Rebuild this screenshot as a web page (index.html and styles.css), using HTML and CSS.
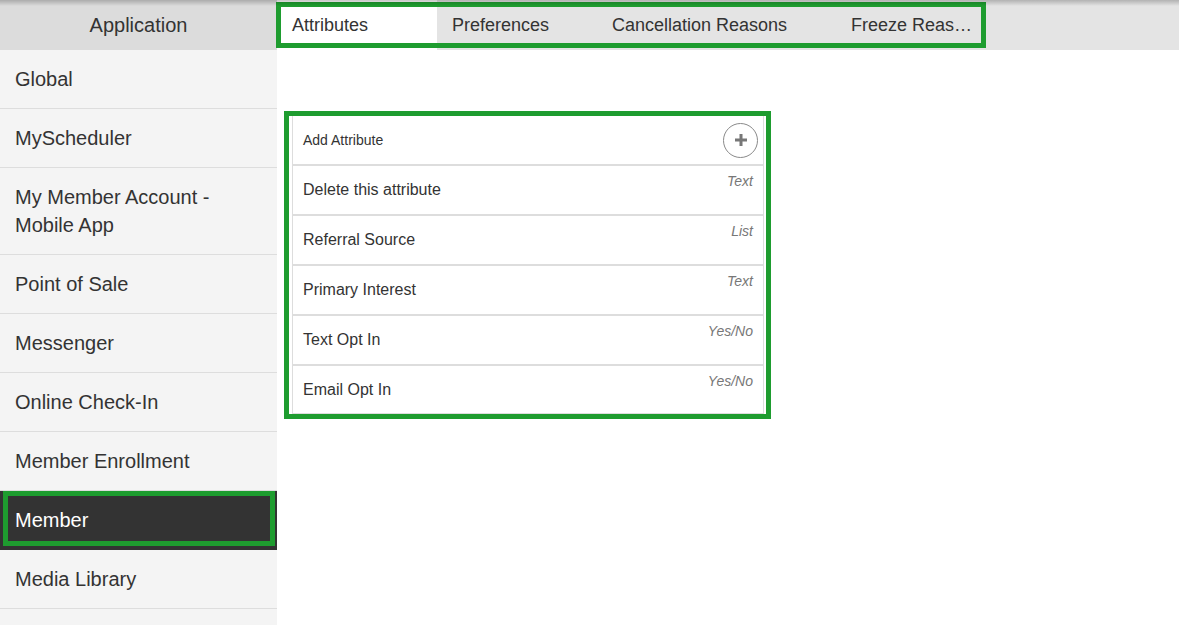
FILE: index.html
```html
<!DOCTYPE html>
<html lang="en">
<head>
<meta charset="utf-8">
<title>Member Attributes</title>
<link rel="stylesheet" href="styles.css">
</head>
<body>
<div class="app">
  <header class="topbar">
    <div class="app-title">Application</div>
    <nav class="tabs">
      <div class="tab tab-active tab-w160">Attributes</div>
      <div class="tab tab-w160">Preferences</div>
      <div class="tab tab-w239">Cancellation Reasons</div>
      <div class="tab tab-last">Freeze Reasons</div>
    </nav>
  </header>
  <div class="main">
    <aside class="sidebar">
      <div class="nav-item">Global</div>
      <div class="nav-item">MyScheduler</div>
      <div class="nav-item">My Member Account - Mobile App</div>
      <div class="nav-item">Point of Sale</div>
      <div class="nav-item">Messenger</div>
      <div class="nav-item">Online Check-In</div>
      <div class="nav-item">Member Enrollment</div>
      <div class="nav-item nav-item-active">Member</div>
      <div class="nav-item">Media Library</div>
    </aside>
    <section class="content">
      <div class="attr-frame">
        <div class="attr-card">
          <div class="attr-row attr-head">
            <span class="attr-head-label">Add Attribute</span>
            <button class="add-btn" type="button" aria-label="Add Attribute">
              <svg width="12" height="12" viewBox="0 0 12 12"><rect x="4.5" y="0" width="3" height="12" fill="#777"/><rect x="0" y="4.5" width="12" height="3" fill="#777"/></svg>
            </button>
          </div>
          <div class="attr-row"><span class="attr-name">Delete this attribute</span><span class="attr-type">Text</span></div>
          <div class="attr-row"><span class="attr-name">Referral Source</span><span class="attr-type">List</span></div>
          <div class="attr-row"><span class="attr-name">Primary Interest</span><span class="attr-type">Text</span></div>
          <div class="attr-row"><span class="attr-name">Text Opt In</span><span class="attr-type">Yes/No</span></div>
          <div class="attr-row attr-row-last"><span class="attr-name">Email Opt In</span><span class="attr-type">Yes/No</span></div>
        </div>
      </div>
    </section>
  </div>
</div>
</body>
</html>
```

FILE: styles.css
```css
* { box-sizing: border-box; }

html, body {
  margin: 0;
  padding: 0;
  height: 100%;
  background: #ffffff;
  font-family: "Liberation Sans", Arial, sans-serif;
  color: #333333;
  overflow: hidden;
}

.app {
  display: flex;
  flex-direction: column;
  height: 100vh;
}

.topbar {
  display: flex;
  height: 50px;
  flex-shrink: 0;
  background: #e4e4e4;
  position: relative;
}

.topbar::before {
  content: "";
  position: absolute;
  left: 0;
  right: 0;
  top: 0;
  height: 6px;
  background: linear-gradient(to bottom, rgba(0,0,0,0.22), rgba(0,0,0,0));
  pointer-events: none;
  z-index: 3;
}

.app-title {
  width: 277px;
  flex-shrink: 0;
  background: #dcdcdc;
  display: flex;
  align-items: center;
  justify-content: center;
  font-size: 20px;
  color: #333;
}

.tabs {
  display: flex;
  position: relative;
  height: 50px;
}

.tabs::after {
  content: "";
  position: absolute;
  top: 2px;
  bottom: 2px;
  left: -1px;
  right: 0;
  border: 5px solid #1e9c2f;
  pointer-events: none;
  z-index: 2;
}

.tab {
  display: flex;
  align-items: center;
  height: 50px;
  padding: 0 15px;
  font-size: 18px;
  color: #333;
  white-space: nowrap;
}

.tab-w160 { width: 160px; }
.tab-w239 { width: 239px; }

.tab-last {
  width: 150px;
  padding: 0 12px 0 15px;
  display: block;
  line-height: 50px;
  overflow: hidden;
  text-overflow: ellipsis;
}

.tab-active { background: #ffffff; }

.main {
  flex: 1;
  display: flex;
  min-height: 0;
}

.sidebar {
  width: 277px;
  flex-shrink: 0;
  background: #f4f4f4;
}

.nav-item {
  position: relative;
  padding: 15px;
  font-size: 20px;
  line-height: 28px;
  color: #333;
  border-bottom: 1px solid #dddddd;
}

.nav-item-active {
  background: #333333;
  color: #ffffff;
  border-bottom-color: #333333;
}

.nav-item-active::after {
  content: "";
  position: absolute;
  top: 0;
  left: 3px;
  right: 2px;
  bottom: 3px;
  border: 5px solid #1e9c2f;
  pointer-events: none;
}

.content {
  flex: 1;
  padding: 61px 0 0 7px;
}

.attr-frame {
  width: 487px;
  border: 5px solid #1e9c2f;
  padding: 0 2px 0 3px;
}

.attr-card {
  border-left: 1px solid #dddddd;
  border-right: 1px solid #dddddd;
  border-bottom: 1px solid #dddddd;
  background: #fff;
}

.attr-row {
  display: flex;
  justify-content: space-between;
  align-items: center;
  height: 50px;
  padding: 0 10px;
  border-top: 2px solid #dddddd;
}

.attr-row-last { height: 49px; }

.attr-head {
  height: 48px;
  border-top: none;
  padding: 0 5px 0 10px;
}

.attr-head-label {
  font-size: 14px;
  color: #333;
}

.add-btn {
  width: 35px;
  height: 35px;
  border-radius: 50%;
  border: 1px solid #8a8a8a;
  background: #fff;
  padding: 0;
  display: flex;
  align-items: center;
  justify-content: center;
  cursor: pointer;
}

.attr-name {
  font-size: 16px;
  color: #333;
}

.attr-type {
  align-self: flex-start;
  margin-top: 7px;
  font-size: 14px;
  font-style: italic;
  color: #777777;
}
```
